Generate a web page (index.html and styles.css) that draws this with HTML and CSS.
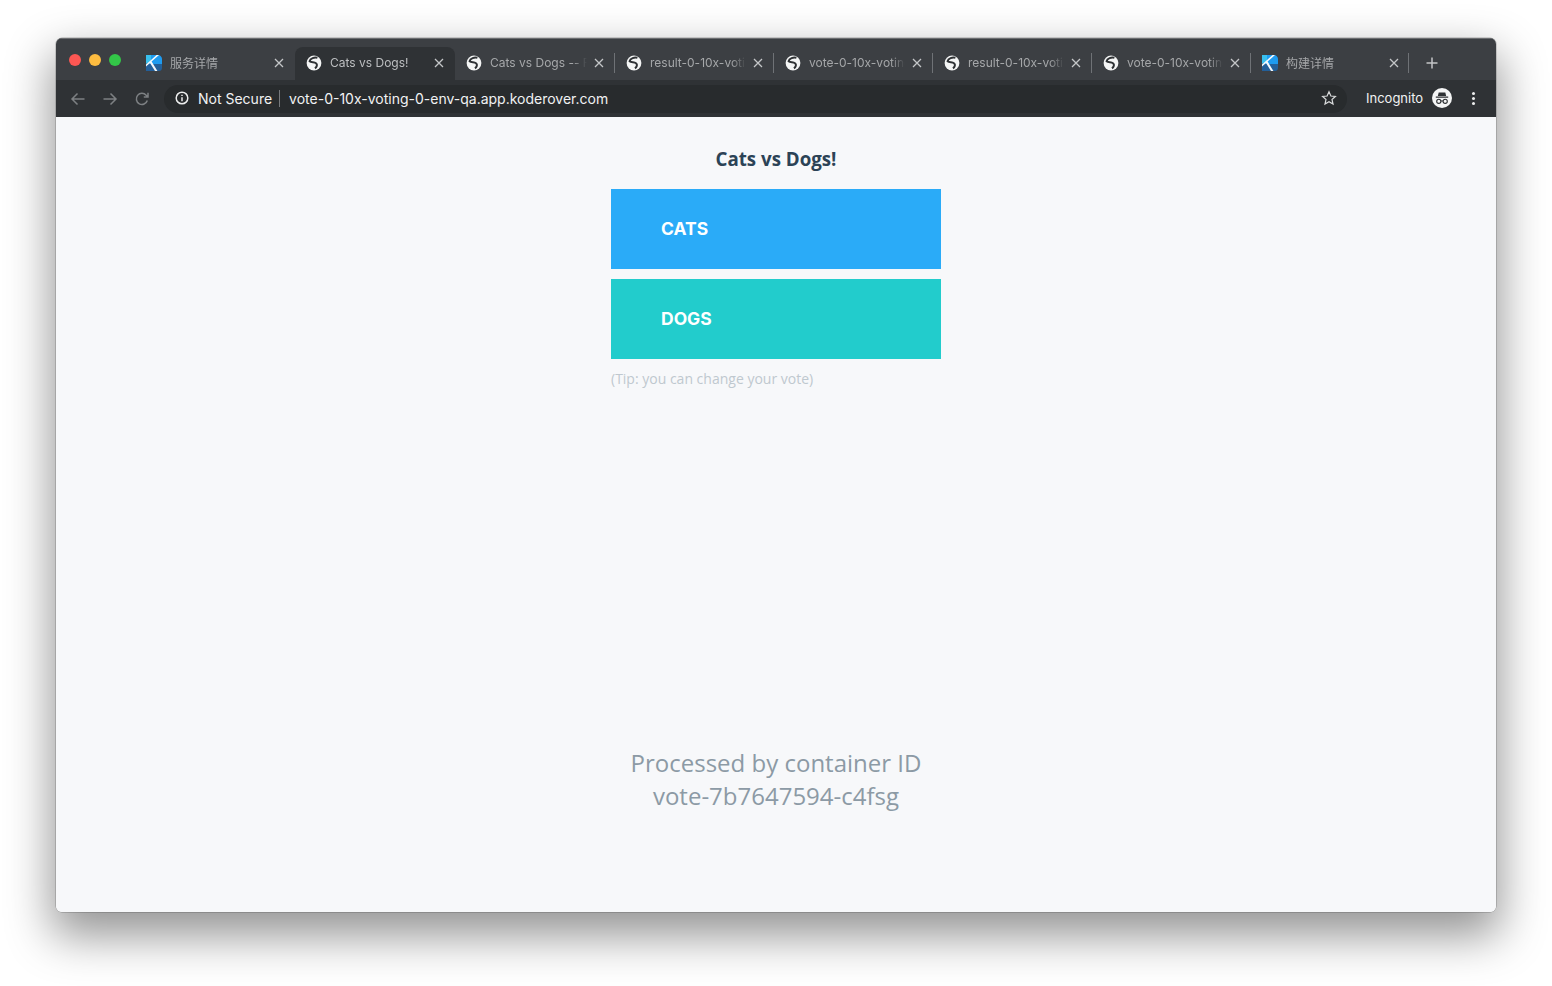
FILE: index.html
```html
<!DOCTYPE html>
<html lang="en">
<head>
    <meta charset="UTF-8">
    <meta name="viewport" content="width=device-width, initial-scale=1.0">
    <title>Cats vs Dogs!</title>
    <link rel="stylesheet" href="styles.css">
</head>
<body>

<svg class="sprites" width="0" height="0">
    <symbol id="globe" viewBox="0 0 16 16">
        <circle cx="8" cy="8" r="7.4" fill="#f4f5f5"/>
        <path d="M11.400 2.800 C8.400 2 4.200 3.400 3.600 6.200 C5.400 7.800 8 6.800 10 8.200 C11.800 9.600 10.800 12 9 13.400" fill="none" stroke="#2e3134" stroke-width="2"/>
    </symbol>
    <symbol id="koderover" viewBox="0 0 16 16">
        <path d="M2 0H12C14.200 0 16 1.800 16 4V9H2Z" fill="#1e9bf0"/>
        <path d="M0 9H16V13C16 14.700 14.700 16 13 16H0Z" fill="#235f99"/>
        <path d="M0 0H5V6L0 9Z" fill="#39c0ee"/>
        <path d="M0 9.600 L10.600 0H13 L5.600 6.600 L11.400 16H9 L4 8 L0 11.600Z" fill="#f4f8fb"/>
    </symbol>
    <symbol id="close" viewBox="0 0 10 10">
        <path d="M1 1 9 9M9 1 1 9" fill="none" stroke="#c4c6c8" stroke-width="1.300"/>
    </symbol>
</svg>

<div class="window">
    <div class="tabstrip">
        <div class="traffic">
            <span class="light red"></span>
            <span class="light yellow"></span>
            <span class="light green"></span>
        </div>
        <div class="tab first">
            <svg class="favicon"><use href="#koderover"/></svg>
            <span class="tab-title">服务详情</span>
            <svg class="tab-close"><use href="#close"/></svg>
        </div>
        <div class="tab active">
            <svg class="favicon"><use href="#globe"/></svg>
            <span class="tab-title">Cats vs Dogs!</span>
            <svg class="tab-close"><use href="#close"/></svg>
        </div>
        <div class="tab after-active">
            <svg class="favicon"><use href="#globe"/></svg>
            <span class="tab-title">Cats vs Dogs -- Result</span>
            <svg class="tab-close"><use href="#close"/></svg>
        </div>
        <div class="tab sep">
            <svg class="favicon"><use href="#globe"/></svg>
            <span class="tab-title">result-0-10x-voting</span>
            <svg class="tab-close"><use href="#close"/></svg>
        </div>
        <div class="tab sep">
            <svg class="favicon"><use href="#globe"/></svg>
            <span class="tab-title">vote-0-10x-voting-0</span>
            <svg class="tab-close"><use href="#close"/></svg>
        </div>
        <div class="tab sep">
            <svg class="favicon"><use href="#globe"/></svg>
            <span class="tab-title">result-0-10x-voting</span>
            <svg class="tab-close"><use href="#close"/></svg>
        </div>
        <div class="tab sep">
            <svg class="favicon"><use href="#globe"/></svg>
            <span class="tab-title">vote-0-10x-voting-0</span>
            <svg class="tab-close"><use href="#close"/></svg>
        </div>
        <div class="tab sep last">
            <svg class="favicon"><use href="#koderover"/></svg>
            <span class="tab-title">构建详情</span>
            <svg class="tab-close"><use href="#close"/></svg>
        </div>
        <svg class="new-tab" viewBox="0 0 12 12"><path d="M6 .5V11.5M.5 6H11.5"/></svg>
    </div>

    <div class="toolbar">
        <svg class="nav-icon" viewBox="0 0 16 16"><path d="M14.5 8H2M7.5 2.5 2 8l5.500 5.500"/></svg>
        <svg class="nav-icon" viewBox="0 0 16 16"><path d="M1.500 8H14M8.500 2.500 14 8l-5.500 5.500"/></svg>
        <svg class="nav-icon" viewBox="0 0 16 16"><path d="M13.300 9.500A5.600 5.600 0 1 1 12.200 4.200L14 6M14 1.800V6H9.800"/></svg>
        <div class="omnibox">
            <svg class="info-icon" viewBox="0 0 14 14">
                <circle cx="7" cy="7" r="5.800"/>
                <path d="M7 6.300V10.300M7 3.700V5"/>
            </svg>
            <span class="security">Not Secure</span>
            <span class="url">vote-0-10x-voting-0-env-qa.app.koderover.com</span>
            <svg class="star" viewBox="0 0 16 16"><path d="M8 1.800 9.900 6l4.500.500-3.400 3 1 4.500L8 11.700 4 14l1-4.500-3.400-3L6.100 6Z"/></svg>
        </div>
        <span class="incognito">Incognito</span>
        <svg class="incognito-icon" viewBox="0 0 20 20">
            <circle cx="10" cy="10" r="10" fill="#f4f5f5"/>
            <path d="M6.700 4.500H13.300L14.200 8H5.800Z M3.800 8.600H16.200V9.800H3.800Z" fill="#2e3134"/>
            <circle cx="6.800" cy="13.300" r="2.100" fill="none" stroke="#2e3134" stroke-width="1.100"/>
            <circle cx="13.200" cy="13.300" r="2.100" fill="none" stroke="#2e3134" stroke-width="1.100"/>
            <path d="M8.900 13H11.100" stroke="#2e3134" stroke-width="1.100"/>
        </svg>
        <div class="menu-dots"><i></i><i></i><i></i></div>
    </div>

    <div class="page">
        <div class="vote">
            <h3 class="question">Cats vs Dogs!</h3>
            <button class="choice cats" type="button">CATS</button>
            <button class="choice dogs" type="button">DOGS</button>
            <p class="tip">(Tip: you can change your vote)</p>
        </div>
        <div class="hostname">
            Processed by container ID<br>vote-7b7647594-c4fsg
        </div>
    </div>
</div>

</body>
</html>
```

FILE: styles.css
```css
html, body {
    margin: 0;
    height: 100%;
}

body {
    background-color: #fff;
    padding: 38px 56px 0;
    box-sizing: border-box;
    overflow: hidden;
    font-family: Inter, "Noto Sans CJK SC", sans-serif;
}

.sprites {
    position: absolute;
}

.window {
    display: flex;
    flex-direction: column;
    width: 1440px;
    height: 874px;
    border-radius: 6px;
    overflow: hidden;
    box-shadow: 0 0 0 .5px rgba(0, 0, 0, .3), 0 20px 46px 4px rgba(0, 0, 0, .42);
}

/* tab strip */
.tabstrip {
    display: flex;
    align-items: flex-end;
    height: 42px;
    flex-shrink: 0;
    background-color: #3c3f43;
    border-top: 1px solid #6b6d70;
    box-sizing: border-box;
}

.traffic {
    display: flex;
    gap: 8px;
    width: 80px;
    height: 35px;
    padding: 9px 0 0 13px;
    box-sizing: border-box;
}

.light {
    width: 12px;
    height: 12px;
    border-radius: 50%;
}

.red { background-color: #fc5753; }
.yellow { background-color: #fdbc40; }
.green { background-color: #33c748; }

.tab {
    display: flex;
    align-items: center;
    width: 159px;
    height: 33px;
    padding: 0 8px 2px 12px;
    box-sizing: border-box;
    flex-shrink: 0;
    color: #a5a7a9;
    font-size: 12px;
    position: relative;
}

.tab.first {
    padding-left: 10px;
    padding-right: 9px;
}

.tab.active {
    width: 160px;
    background-color: #2f3235;
    color: #bcbec0;
    border-radius: 8px 8px 0 0;
    padding-left: 11px;
    padding-right: 9px;
}

.tab.after-active {
    padding-left: 11px;
}

.sep::before,
.last::after {
    content: "";
    position: absolute;
    left: 0;
    top: 6px;
    width: 1px;
    height: 20px;
    background-color: #6f7276;
}

.last::after {
    left: auto;
    right: 0;
}

.favicon {
    width: 16px;
    height: 16px;
    flex-shrink: 0;
    margin-right: 8px;
}

.tab-title {
    flex: 1;
    white-space: nowrap;
    overflow: hidden;
    font-variant-ligatures: none;
    font-feature-settings: "calt" 0;
    -webkit-mask-image: linear-gradient(to right, #000 85%, transparent 100%);
    mask-image: linear-gradient(to right, #000 85%, transparent 100%);
}

.tab-close {
    width: 10px;
    height: 10px;
    flex-shrink: 0;
    margin: 0 2px 0 7px;
}

.new-tab {
    width: 12px;
    height: 12px;
    margin: 0 0 11px 17px;
    fill: none;
    stroke: #c4c6c8;
    stroke-width: 1.500;
}

/* toolbar */
.toolbar {
    display: flex;
    align-items: center;
    height: 37px;
    flex-shrink: 0;
    padding-left: 14px;
    background-color: #2f3235;
}

.nav-icon {
    width: 16px;
    height: 16px;
    margin-right: 16px;
    fill: none;
    stroke: #7d8083;
    stroke-width: 1.500;
}

.omnibox {
    display: flex;
    align-items: center;
    width: 1183px;
    height: 28px;
    margin-left: -2px;
    padding: 0 10px 1px 11px;
    box-sizing: border-box;
    border-radius: 14px;
    background-color: #282b2d;
    color: #f1f2f3;
    font-size: 14px;
}

.info-icon {
    width: 14px;
    height: 14px;
    margin-right: 9px;
    fill: none;
    stroke: #eceded;
    stroke-width: 1.500;
}

.security {
    padding-right: 7px;
    border-right: 1px solid #77797c;
    line-height: 17px;
    margin-right: 9px;
}

.url {
    flex: 1;
    line-height: 17px;
}

.star {
    width: 16px;
    height: 16px;
    fill: none;
    stroke: #d8dadb;
    stroke-width: 1.200;
}

.incognito {
    margin-left: 19px;
    margin-bottom: 1px;
    color: #f1f2f3;
    font-size: 13px;
}

.incognito-icon {
    width: 20px;
    height: 20px;
    margin-left: 9px;
    margin-bottom: 1px;
}

.menu-dots {
    display: flex;
    flex-direction: column;
    gap: 2px;
    margin-left: 20px;
    margin-bottom: 1px;
}

.menu-dots i {
    width: 3px;
    height: 3px;
    border-radius: 50%;
    background-color: #eceded;
}

/* page content */
.page {
    flex: 1;
    background-color: #f7f8fa;
    font-family: "Open Sans", sans-serif;
}

.vote {
    width: 330px;
    margin: 0 auto;
}

.question {
    margin: 0;
    padding: 29px 0 18px;
    text-align: center;
    font-size: 18.72px;
    line-height: 25px;
    font-weight: 700;
    color: #2c4356;
}

.choice {
    display: block;
    width: 330px;
    height: 80px;
    margin-bottom: 10px;
    padding: 0 0 2px 50px;
    border: none;
    text-align: left;
    color: #fff;
    font-family: Inter, sans-serif;
    font-size: 17.5px;
    font-weight: 700;
    cursor: pointer;
}

.cats { background-color: #2aabf8; }
.dogs { background-color: #22cccc; }

.tip {
    margin: 0;
    font-size: 14px;
    line-height: 19px;
    color: #bfc8cf;
}

.hostname {
    margin-top: 358px;
    text-align: center;
    font-size: 24px;
    line-height: 33px;
    color: #8c9aa5;
}
```
